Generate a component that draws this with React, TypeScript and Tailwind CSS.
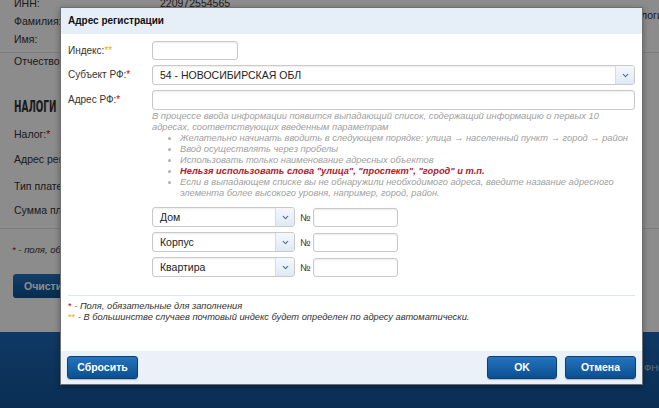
import { ChevronDown } from "lucide-react"

const font = { fontFamily: '"Liberation Sans", Arial, sans-serif' }

function Select({ value, w }: { value: string; w: string }) {
  return (
    <div className={`${w} h-[20px] flex border border-[#c9c9c9] rounded-[3px] bg-white shadow-[inset_0_1px_2px_rgba(0,0,0,0.08)] overflow-hidden`}>
      <div className="flex-1 pl-[7px] text-[10.5px] leading-[18px] text-[#222] truncate">{value}</div>
      <div className="w-[19px] flex items-center justify-center border-l border-[#d3dce6] bg-gradient-to-b from-[#f4f8fc] to-[#dfe9f4]">
        <ChevronDown className="w-[9px] h-[9px] text-[#4b6f99]" strokeWidth={3} />
      </div>
    </div>
  )
}

function Input({ w }: { w: string }) {
  return <div className={`${w} h-[19px] border border-[#c9c9c9] rounded-[3px] bg-white shadow-[inset_0_1px_2px_rgba(0,0,0,0.08)]`} />
}

function Btn({ children, w }: { children: string; w: string }) {
  return (
    <button className={`${w} h-[23px] rounded-[3px] border border-[#0a3f78] bg-gradient-to-b from-[#2474be] to-[#0b4f92] text-white text-[10.5px] font-bold shadow-[0_1px_1px_rgba(0,0,0,0.25)]`}>
      {children}
    </button>
  )
}

export default function App() {
  return (
    <div className="relative w-[659px] h-[408px] overflow-hidden bg-white text-[#333]" style={font}>
      {/* page behind the modal */}
      <div className="flex flex-col h-full">
        <div className="relative flex-1 text-[10.5px]">
          <div className="absolute left-[14px] top-[-4px]">ИНН:</div>
          <div className="absolute left-[160px] top-[-4px]">220972554565</div>
          <div className="absolute left-[641px] top-[8px] whitespace-nowrap">логин</div>
          <div className="absolute left-0 right-0 top-[52px] h-px bg-[#e2e2e2]" />
          <div className="absolute left-[14px] top-[14px]">Фамилия:</div>
          <div className="absolute left-[14px] top-[32px]">Имя:</div>
          <div className="absolute left-[14px] top-[54px]">Отчество</div>
          <div className="absolute left-[14px] top-[95px] text-[16px] font-bold scale-x-[0.62] origin-left" style={{ fontFamily: '"DejaVu Sans Condensed", "DejaVu Sans", sans-serif' }}>НАЛОГИ</div>
          <div className="absolute left-[14px] top-[127px]">Налог:<span className="text-[#c00]">*</span></div>
          <div className="absolute left-[14px] top-[152px]">Адрес регистрации:</div>
          <div className="absolute left-[14px] top-[179px]">Тип платежа:</div>
          <div className="absolute left-[14px] top-[203px]">Сумма платежа:</div>
          <div className="absolute left-0 right-0 top-[228px] h-px bg-[#e2e2e2]" />
          <div className="absolute left-[12px] top-[243px] italic text-[9.5px]"><span className="text-[#c00]">*</span> - поля, обязательные для заполнения</div>
          <div className="absolute left-[13px] top-[274px] w-[90px] h-[24px] rounded-[3px] bg-gradient-to-b from-[#2474be] to-[#0b4f92] text-white text-[10.5px] font-bold leading-[24px] pl-[11px]">Очистить</div>
        </div>
        <div className="h-[76px] bg-gradient-to-b from-[#1c68b6] to-[#14559a] relative">
          <div className="absolute left-[644px] top-[29px] text-[9.5px] text-[#b8c8dc] whitespace-nowrap">ФНС</div>
        </div>
      </div>

      {/* overlay */}
      <div className="absolute inset-0 bg-black/[0.45]" />

      {/* modal */}
      <div className="absolute left-[60px] top-[7px] w-[583px] h-[378px] flex flex-col bg-white border border-[#6f6f6f] shadow-[0_2px_6px_rgba(0,0,0,0.35)]">
        <div className="h-[26px] bg-[#e6eef8] pl-[7px] text-[10px] font-bold leading-[26px] text-[#111]">Адрес регистрации</div>

        <div className="flex-1 flex flex-col px-[7px] pt-[7px] text-[10px] text-[#333]">
          <div className="flex flex-col gap-[5px]">
            <div className="flex items-start">
              <div className="w-[84px] pt-[2px]">Индекс:<span className="text-[#f0b000]">**</span></div>
              <Input w="w-[86px]" />
            </div>
            <div className="flex items-start">
              <div className="w-[84px] pt-[2px]">Субъект РФ:<span className="text-[#c00]">*</span></div>
              <Select value="54 - НОВОСИБИРСКАЯ ОБЛ" w="flex-1" />
            </div>
            <div className="flex items-start">
              <div className="w-[84px] pt-[2px]">Адрес РФ:<span className="text-[#c00]">*</span></div>
              <div className="flex-1 h-[20px] border border-[#c9c9c9] rounded-[3px] shadow-[inset_0_1px_2px_rgba(0,0,0,0.08)]" />
            </div>
          </div>

          <div className="ml-[84px] mt-px text-[9.3px] leading-[11px] italic text-[#a0a0a0] whitespace-nowrap">
            <p>
              В процессе ввода информации появится выпадающий список, содержащий информацию о первых 10<br />
              адресах, соответствующих введенным параметрам
            </p>
            <ul className="list-disc pl-[28px] marker:text-[#b0b0b0]">
              <li>Желательно начинать вводить в следующем порядке: улица → населенный пункт → город → район</li>
              <li>Ввод осуществлять через пробелы</li>
              <li>Использовать только наименование адресных объектов</li>
              <li className="text-[#b0202a] font-bold">Нельзя использовать слова "улица", "проспект", "город" и т.п.</li>
              <li>
                Если в выпадающем списке вы не обнаружили необходимого адреса, введите название адресного<br />
                элемента более высокого уровня, например, город, район.
              </li>
            </ul>
          </div>

          <div className="ml-[84px] mt-[8px] flex flex-col gap-[5px]">
            {["Дом", "Корпус", "Квартира"].map((v) => (
              <div key={v} className="flex items-center">
                <Select value={v} w="w-[143px]" />
                <span className="w-[18px] pl-[5px] text-[10px]">№</span>
                <Input w="w-[85px]" />
              </div>
            ))}
          </div>

          <div className="mt-[18px] h-px bg-[#dde6f0]" />

          <div className="mt-[5px] text-[9.3px] leading-[11px] italic text-[#333]">
            <p><span className="text-[#c00] not-italic">*</span> - Поля, обязательные для заполнения</p>
            <p><span className="text-[#f0b000] not-italic">**</span> - В большинстве случаев почтовый индекс будет определен по адресу автоматически.</p>
          </div>
        </div>

        <div className="h-[33px] bg-[#eaf1f8] flex items-center px-[6px] gap-[8px]">
          <Btn w="w-[71px]">Сбросить</Btn>
          <div className="flex-1" />
          <Btn w="w-[70px]">OK</Btn>
          <Btn w="w-[71px]">Отмена</Btn>
        </div>
      </div>
    </div>
  )
}
